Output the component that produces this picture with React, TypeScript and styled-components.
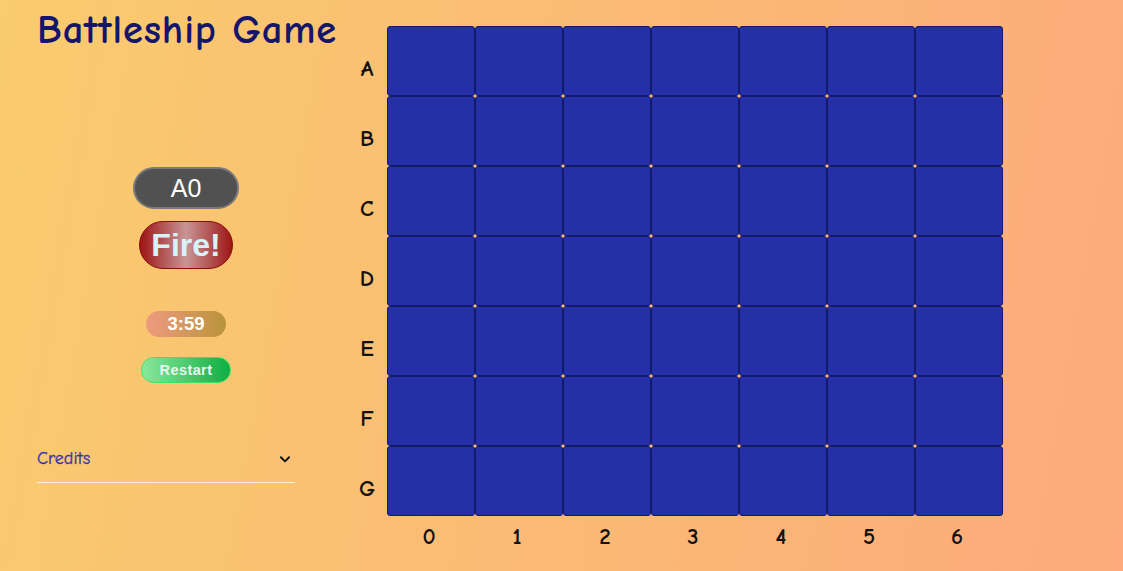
import React from "react";
import styled, { createGlobalStyle } from "styled-components";

const GlobalStyle = createGlobalStyle`
  html, body {
    margin: 0;
    padding: 0;
    height: 100%;
  }
  body {
    background: linear-gradient(100deg, #f9cc6e 0%, #fcaa7b 100%);
    background-attachment: fixed;
    min-height: 571px;
    font-family: "Comic Sans MS", "Comic Neue", "DejaVu Sans", sans-serif;
  }
`;

const Page = styled.div`
  display: flex;
  align-items: flex-start;
  padding-left: 37px;
  height: 571px;
  box-sizing: border-box;
`;

const Side = styled.aside`
  width: 300px;
  display: flex;
  flex-direction: column;
`;

const Title = styled.h1`
  margin: 7px 0 0 0;
  font-size: 40.5px;
  font-weight: 700;
  color: #15166b;
  letter-spacing: 0.9px;
  white-space: nowrap;
  line-height: 46px;
`;

const Controls = styled.div`
  display: flex;
  flex-direction: column;
  align-items: center;
  margin-top: 114px;
  width: 298px;
`;

const CoordBox = styled.div`
  width: 106px;
  height: 42px;
  box-sizing: border-box;
  border-radius: 21px;
  background: #515151;
  border: 2px solid #7a7a7a;
  color: #ffffff;
  font-family: "Liberation Sans", Arial, sans-serif;
  font-size: 25px;
  display: flex;
  align-items: center;
  justify-content: center;
`;

const FireButton = styled.button`
  margin-top: 12px;
  width: 94px;
  height: 48px;
  border-radius: 24px;
  border: 1px solid #8a0b0b;
  background: linear-gradient(90deg, #9e1515 0%, #c99595 50%, #9e1515 100%);
  color: #d8f2fa;
  font-family: "Liberation Sans", Arial, sans-serif;
  font-weight: 700;
  font-size: 32px;
  padding: 0;
  display: flex;
  align-items: center;
  justify-content: center;
`;

const Timer = styled.div`
  margin-top: 42px;
  width: 80px;
  height: 26px;
  border-radius: 13px;
  background: linear-gradient(90deg, #f09a80 0%, #b8943a 100%);
  color: #ffffff;
  font-family: "Liberation Sans", Arial, sans-serif;
  font-weight: 700;
  font-size: 18.5px;
  display: flex;
  align-items: center;
  justify-content: center;
`;

const RestartButton = styled.button`
  margin-top: 20px;
  width: 90px;
  height: 26px;
  border-radius: 13px;
  border: 1px solid #3ee26a;
  background: linear-gradient(90deg, #8ae89c 0%, #0fae42 100%);
  color: #e6f6f0;
  font-family: "Liberation Sans", Arial, sans-serif;
  font-weight: 700;
  font-size: 14.5px;
  letter-spacing: 0.4px;
  padding: 0;
`;

const Credits = styled.div`
  margin-top: 62px;
  width: 258px;
  border-bottom: 1px solid #fff3d8;
  display: flex;
  align-items: center;
  justify-content: space-between;
  height: 38px;
  box-sizing: border-box;
  padding-bottom: 14px;
  padding-top: 4px;
`;

const CreditsLabel = styled.span`
  color: #3333b3;
  font-size: 18px;
  font-weight: 400;
  -webkit-text-stroke: 0.3px #3333b3;
`;

const Chevron = styled.svg`
  width: 14px;
  height: 14px;
  margin-right: 3px;
`;

const Board = styled.div`
  display: grid;
  grid-template-columns: 34px repeat(7, 88px);
  grid-template-rows: repeat(7, 70px) 44px;
  margin-top: 26px;
  margin-left: 16px;
`;

const RowLabel = styled.div`
  display: flex;
  align-items: center;
  justify-content: center;
  padding-top: 15px;
  font-size: 23px;
  font-weight: 700;
  color: #111;
  padding-right: 6px;
`;

const ColLabel = styled.div`
  display: flex;
  align-items: center;
  justify-content: center;
  font-size: 23px;
  font-weight: 700;
  color: #111;
  padding-right: 4px;
  padding-bottom: 4px;
`;

const Cell = styled.div`
  box-sizing: border-box;
  background: #2530a8;
  border: 1px solid #141a6a;
  border-radius: 3px;
`;

const rows = ["A", "B", "C", "D", "E", "F", "G"];
const cols = [0, 1, 2, 3, 4, 5, 6];

export default function App() {
  return (
    <>
      <GlobalStyle />
      <Page>
        <Side>
          <Title>Battleship Game</Title>
          <Controls>
            <CoordBox>A0</CoordBox>
            <FireButton>Fire!</FireButton>
            <Timer>3:59</Timer>
            <RestartButton>Restart</RestartButton>
          </Controls>
          <Credits>
            <CreditsLabel>Credits</CreditsLabel>
            <Chevron viewBox="0 0 24 24" fill="none" stroke="#111" strokeWidth="3.2" strokeLinecap="round" strokeLinejoin="round">
              <polyline points="5 9 12 16 19 9" />
            </Chevron>
          </Credits>
        </Side>
        <Board>
          {rows.map((r) => (
            <React.Fragment key={r}>
              <RowLabel>{r}</RowLabel>
              {cols.map((c) => (
                <Cell key={r + c} />
              ))}
            </React.Fragment>
          ))}
          <div />
          {cols.map((c) => (
            <ColLabel key={c}>{c}</ColLabel>
          ))}
        </Board>
      </Page>
    </>
  );
}
